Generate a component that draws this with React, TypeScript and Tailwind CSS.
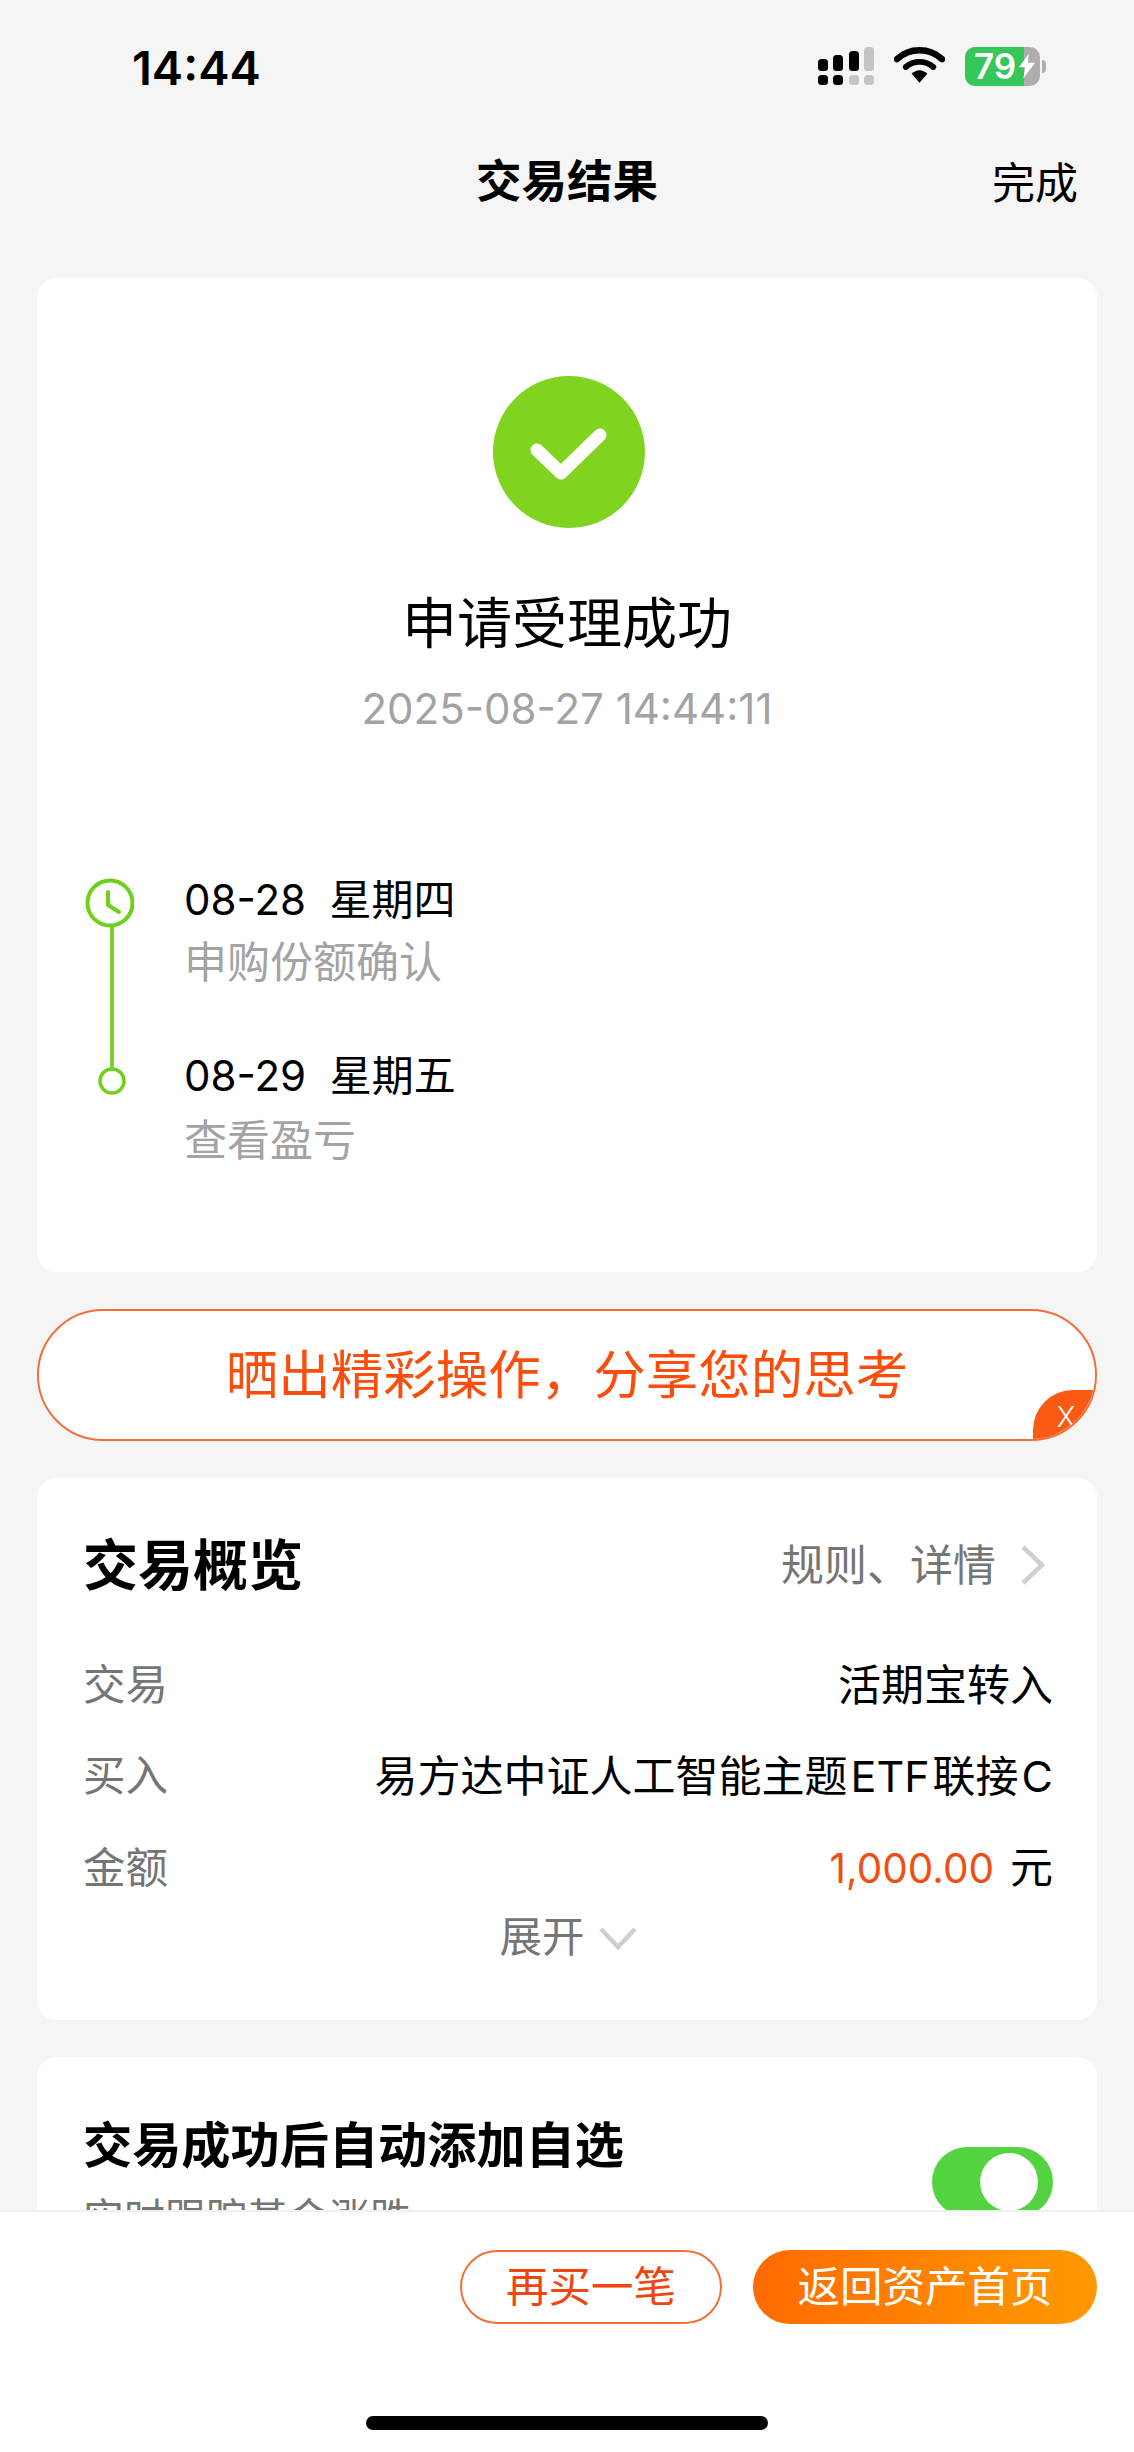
const CJK = "font-['Inter','Noto_Sans_CJK_SC',sans-serif]";

function Signal() {
  const dark = "#000";
  const dim = "#c4c4c4";
  const cols = [
    { x: 0, top: 13, c1: dark, c2: dark },
    { x: 15, top: 9, c1: dark, c2: dark },
    { x: 31, top: 5, c1: dark, c2: dim },
    { x: 46, top: 1, c1: dim, c2: dim },
  ];
  return (
    <svg width="56" height="40" viewBox="0 0 56 40">
      {cols.map((b) => (
        <g key={b.x}>
          <rect x={b.x} y={b.top} width="10" height={25 - b.top} rx="3.5" fill={b.c1} />
          <rect x={b.x} y="29" width="10" height="10" rx="3.5" fill={b.c2} />
        </g>
      ))}
    </svg>
  );
}

function Wifi() {
  return (
    <svg width="51" height="40" viewBox="0 0 52 40">
      <path d="M3 13 C16 1 36 1 49 13" fill="none" stroke="#000" strokeWidth="6.5" strokeLinecap="round" />
      <path d="M12 21 C20 14 32 14 40 21" fill="none" stroke="#000" strokeWidth="6" strokeLinecap="round" />
      <path d="M18 28 C23 23 29 23 34 28 L26 37 Z" fill="#000" />
    </svg>
  );
}

function Battery() {
  return (
    <div className="flex items-center">
      <div className="relative w-[75px] h-[39px] rounded-[10px] bg-[#aeaeae] flex items-center">
        <div className="absolute left-0 top-0 bottom-0 w-[59px] rounded-l-[10px] bg-[#35c759]" />
        <span className="relative ml-[9px] text-white text-[35px] font-semibold leading-[39px] font-['Inter',sans-serif]">79</span>
        <svg className="absolute left-[53px] top-[6px]" width="18" height="26" viewBox="0 0 20 27">
          <path d="M12 0 L1 15 H8 L6 27 L19 10 H11 Z" fill="#fff" />
        </svg>
      </div>
      <div className="ml-[2px] w-[4px] h-[13px] rounded-r-full bg-[#aeaeae]" />
    </div>
  );
}

function StatusBar() {
  return (
    <div className="h-[131px] pt-[41px] pl-[132px] pr-[88px] flex justify-between items-start">
      <span className="text-[47px] leading-[54px] font-semibold text-black font-['Inter',sans-serif]">14:44</span>
      <div className="flex items-center gap-[20px] pt-[5px]">
        <Signal />
        <Wifi />
        <Battery />
      </div>
    </div>
  );
}

function NavBar() {
  return (
    <div className="relative h-[105px] flex items-start justify-center pt-[23px]">
      <span className="text-[45.5px] leading-[56px] font-bold text-black">交易结果</span>
      <span className="absolute right-[56px] top-[24px] text-[43px] leading-[56px] text-black">完成</span>
    </div>
  );
}

function ResultCard() {
  return (
    <section className="h-[994px] rounded-[20px] bg-white pt-[98px]">
      <div className="flex flex-col items-center">
        <div className="ml-[3px] w-[152px] h-[152px] rounded-full bg-[#80d41f]">
          <svg width="152" height="152" viewBox="0 0 152 152">
            <path d="M44 74 L68 97 L107 59" fill="none" stroke="#fff" strokeWidth="13" strokeLinecap="round" strokeLinejoin="round" />
          </svg>
        </div>
        <h1 className="mt-[57px] text-[55px] leading-[76px] font-normal text-black">申请受理成功</h1>
        <p className="mt-[23px] text-[42px] leading-[50px] text-[#a3a3a3]">2025-08-27 14:44:11</p>
      </div>
      <div className="mt-[138px] ml-[47px] flex">
        <Timeline />
        <div className="ml-[50px]">
          <p className="text-[42px] leading-[56px] text-black whitespace-pre">08-28  星期四</p>
          <p className="mt-[6px] text-[43px] leading-[56px] text-[#a3a3a3]">申购份额确认</p>
          <p className="mt-[58px] text-[42px] leading-[56px] text-black whitespace-pre">08-29  星期五</p>
          <p className="mt-[8px] text-[43px] leading-[56px] text-[#a3a3a3]">查看盈亏</p>
        </div>
      </div>
    </section>
  );
}

function Timeline() {
  return (
    <svg width="50" height="230" viewBox="0 0 50 230" className="shrink-0">
      <circle cx="26" cy="31" r="22.5" fill="none" stroke="#6fd01c" strokeWidth="4" />
      <path d="M24 20 V33 L35 40" fill="none" stroke="#6fd01c" strokeWidth="4" strokeLinecap="round" strokeLinejoin="round" />
      <rect x="26.2" y="53" width="3.6" height="143" fill="#6fd01c" />
      <circle cx="28" cy="209" r="12" fill="none" stroke="#6fd01c" strokeWidth="3.5" />
    </svg>
  );
}

function ShareBanner() {
  return (
    <div className="relative mt-[37px] h-[132px] rounded-[66px] overflow-hidden border-2 border-[#f0703a] bg-white flex items-center justify-center">
      <span className="text-[52.5px] leading-[60px] text-[#fb4e0c]">晒出精彩操作，分享您的思考</span>
      <div className="absolute right-[-2px] bottom-[-2px] w-[64px] h-[51px] bg-[#fb5a14] rounded-tl-[40px] flex items-center justify-center">
        <span className="text-white text-[28px] leading-[34px] font-light pl-[2px] pt-[3px] font-['Inter',sans-serif]">X</span>
      </div>
    </div>
  );
}

function Row({ label, children }: { label: string; children: React.ReactNode }) {
  return (
    <div className="h-[91.5px] flex items-center justify-between">
      <span className="text-[42.5px] leading-[56px] text-[#757575]">{label}</span>
      <span className="text-[43px] leading-[56px] text-black">{children}</span>
    </div>
  );
}

function OverviewCard() {
  return (
    <section className="mt-[37px] h-[542px] rounded-[20px] bg-white pl-[46px] pr-[44px] pt-[52px]">
      <div className="flex items-center justify-between h-[70px]">
        <h2 className="text-[55px] leading-[70px] font-bold text-black">交易概览</h2>
        <div className="flex items-center">
          <span className="text-[43px] leading-[56px] text-[#757575]">规则、详情</span>
          <svg className="ml-[24px] mr-[7px]" width="26" height="42" viewBox="0 0 26 42">
            <path d="M3 3 L22 21 L3 39" fill="none" stroke="#cfcfcf" strokeWidth="4.5" />
          </svg>
        </div>
      </div>
      <div className="mt-[39px]">
        <Row label="交易">活期宝转入</Row>
        <Row label="买入">
          易方达中证人工智能主题<span className="mx-[3px]">ETF</span>联接<span className="ml-[3px]">C</span>
        </Row>
        <Row label="金额">
          <span className="text-[40.5px] text-[#f04e12]">1,000.00</span>
          <span className="ml-[16px]">元</span>
        </Row>
      </div>
      <div className="flex items-center justify-center -mt-[5px] h-[56px]">
        <span className="text-[42.5px] leading-[56px] text-[#757575]">展开</span>
        <svg className="ml-[14px] mt-[3px]" width="38" height="24" viewBox="0 0 38 24">
          <path d="M2 3 L19 21 L36 3" fill="none" stroke="#cfcfcf" strokeWidth="4.5" />
        </svg>
      </div>
    </section>
  );
}

function WatchlistCard() {
  return (
    <section className="mt-[37px] h-[300px] rounded-[20px] bg-white pl-[46px] pr-[44px] pt-[56px] flex justify-between">
      <div>
        <h2 className="text-[49.2px] leading-[64px] font-bold text-black">交易成功后自动添加自选</h2>
        <p className="mt-[15px] text-[41px] leading-[52px] text-[#757575]">实时跟踪基金涨跌</p>
      </div>
      <div className="mt-[34px] w-[121px] h-[70px] rounded-full bg-[#52d33f] flex items-center justify-end pr-[15px]">
        <div className="w-[58px] h-[58px] rounded-full bg-white" />
      </div>
    </section>
  );
}

function Footer() {
  return (
    <footer className="absolute left-0 right-0 bottom-0 h-[242px] bg-white border-t-2 border-[#f0f0f0]">
      <div className="mt-[38px] pr-[37px] flex justify-end gap-[31px]">
        <button className="w-[262px] h-[74px] rounded-full border-2 border-[#f0703a] bg-white text-[42.5px] leading-none text-[#f0450e]">再买一笔</button>
        <button className="w-[344px] h-[74px] rounded-full bg-gradient-to-r from-[#ff6a00] to-[#ff9900] text-[42.5px] leading-none text-white">返回资产首页</button>
      </div>
      <div className="absolute left-[366px] bottom-[22px] w-[402px] h-[14px] rounded-full bg-black" />
    </footer>
  );
}

export default function App() {
  return (
    <div className={`relative w-[1134px] h-[2452px] overflow-hidden bg-[#f5f5f5] ${CJK}`}>
      <StatusBar />
      <NavBar />
      <main className="px-[37px] pt-[42px]">
        <ResultCard />
        <ShareBanner />
        <OverviewCard />
        <WatchlistCard />
      </main>
      <Footer />
    </div>
  );
}
